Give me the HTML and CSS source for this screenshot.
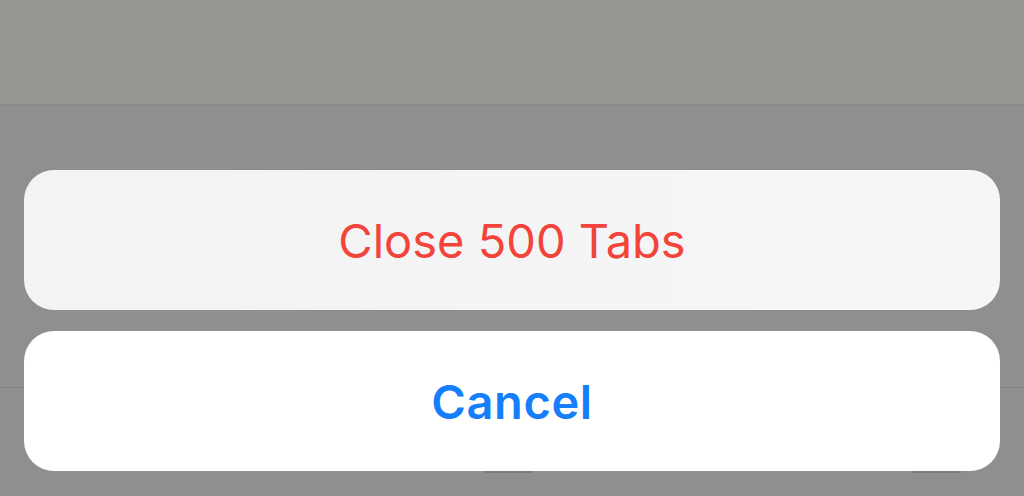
FILE: index.html
```html
<!DOCTYPE html>
<html>
<head>
<meta charset="utf-8">
<link rel="stylesheet" href="styles.css">
</head>
<body>
<div class="screen">
  <div class="topbar"></div>
  <div class="sheet">
    <div class="action destructive">Close 500 Tabs</div>
    <div class="action cancel">Cancel</div>
  </div>
</div>
</body>
</html>
```
FILE: styles.css
```css
html, body {
  margin: 0;
  padding: 0;
}
body {
  width: 1024px;
  height: 496px;
  overflow: hidden;
  font-family: "Inter", "Liberation Sans", sans-serif;
}
.screen {
  width: 1024px;
  height: 496px;
  background-color: #8f8f8f;
  background-image:
    linear-gradient(#7d7d7d, #7d7d7d),
    linear-gradient(#7d7d7d, #7d7d7d),
    linear-gradient(#808080, #808080);
  background-size: 48px 2px, 49px 2px, 1024px 1px;
  background-position: 485px 471px, 912px 471px, 0 387px;
  background-repeat: no-repeat;
}
.topbar {
  height: 104px;
  background: #979591;
  border-bottom: 2px solid #8b8b8b;
}
.sheet {
  display: flex;
  flex-direction: column;
  gap: 21px;
  padding: 64px 24px 0;
}
.action {
  height: 140px;
  border-radius: 30px;
  display: flex;
  align-items: center;
  justify-content: center;
  font-size: 47px;
}
.destructive {
  background: linear-gradient(90deg, #f3f3f3, #f6f6f8);
  color: #f3443b;
  font-weight: 400;
}
.cancel {
  background: #ffffff;
  color: #157efb;
  font-weight: 600;
  letter-spacing: 0.6px;
}
```
